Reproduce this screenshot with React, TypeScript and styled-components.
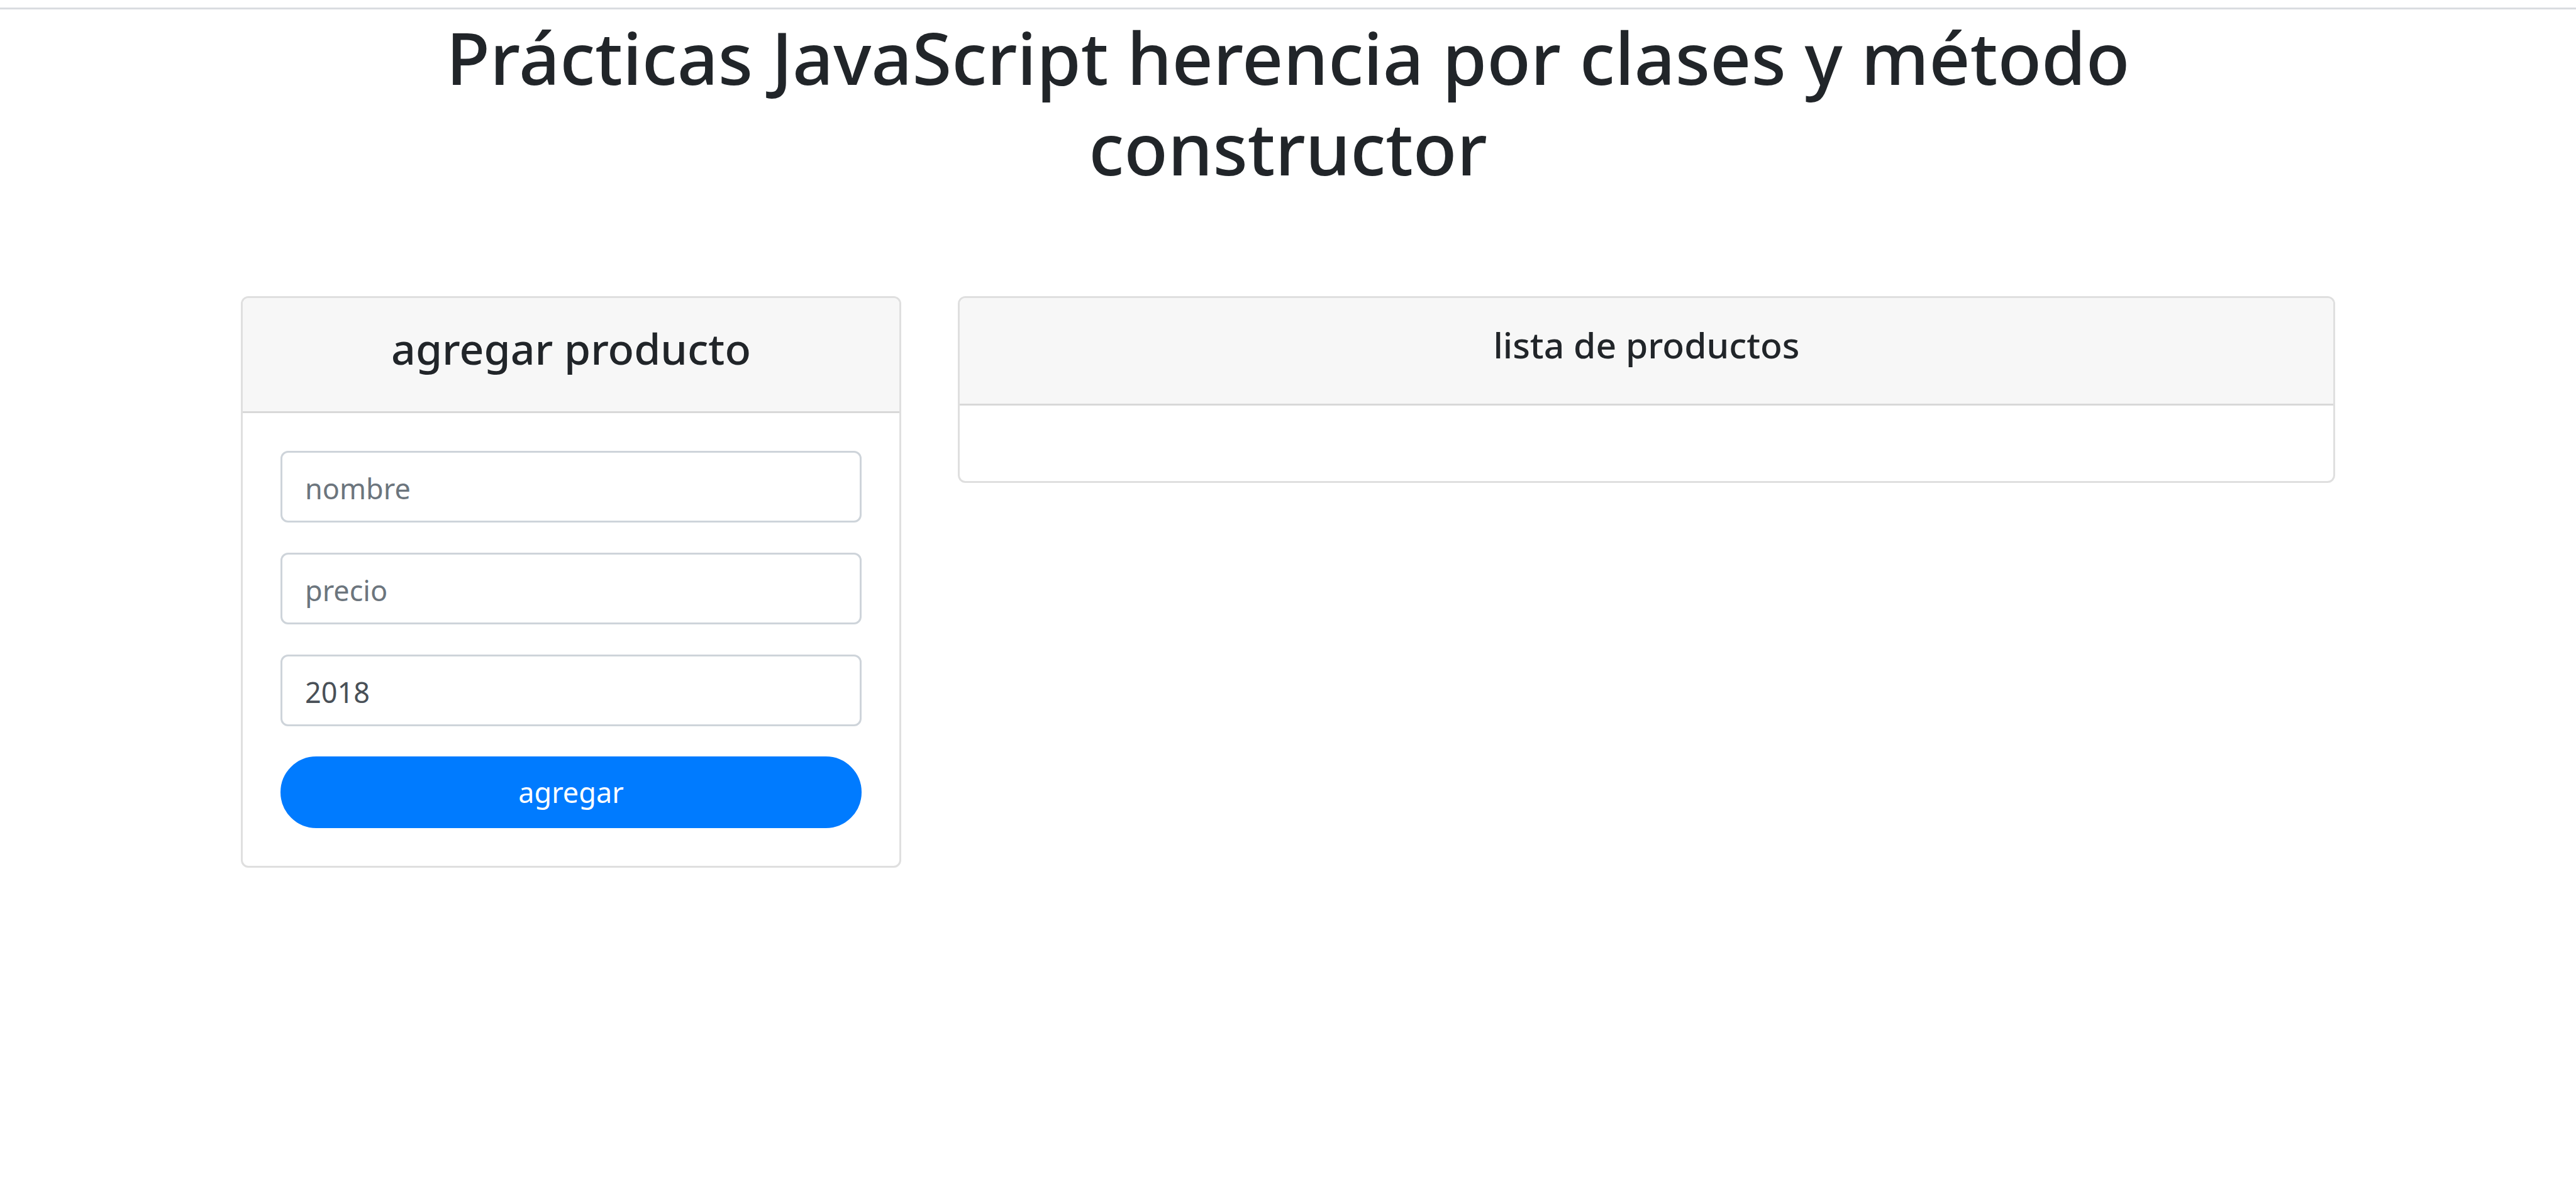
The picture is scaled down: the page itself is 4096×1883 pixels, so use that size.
import React, { useState } from "react";
import styled, { createGlobalStyle } from "styled-components";

const GlobalStyle = createGlobalStyle`
  *, *::before, *::after { box-sizing: border-box; }
  body {
    margin: 0;
    background: #fff;
    color: #212529;
    font-family: "Noto Sans", "Open Sans", sans-serif;
    font-size: 45px;
    line-height: 72px;
  }
`;

const Navbar = styled.nav`
  padding-top: 12px;
  border-bottom: 3px solid #dadce0;
`;

const Container = styled.main`
  width: 100%;
  max-width: 3420px;
  margin: 0 auto;
  padding: 0 45px;
`;

const Title = styled.h1`
  margin: 0 0 164px;
  padding: 4px 45px 0;
  font-size: 114px;
  font-weight: 500;
  line-height: 144px;
  text-align: center;
`;

const Row = styled.div`
  display: flex;
  align-items: flex-start;
  margin: 0 -45px;
`;

const Column = styled.div<{ $span: number }>`
  flex: 0 0 calc(100% * ${(p) => p.$span} / 12);
  padding: 0 45px;
`;

const Card = styled.section`
  overflow: hidden;
  border: 3px solid #dfdfdf;
  border-radius: 12px;
`;

const CardHeader = styled.header`
  padding: 38px 60px 58px;
  border-bottom: 3px solid #d8d8d8;
  background: #f7f7f7;
  text-align: center;
`;

const FormHeading = styled.h2`
  margin: 0;
  font-size: 68px;
  font-weight: 500;
  line-height: 84px;
`;

const ListHeading = styled.h3`
  margin: 0;
  font-size: 57px;
  font-weight: 500;
  line-height: 72px;
`;

const ProductForm = styled.form`
  display: flex;
  flex-direction: column;
  gap: 48px;
  padding: 60px;
`;

const Input = styled.input`
  width: 100%;
  height: 114px;
  padding: 20px 36px 16px;
  border: 3px solid #ced4da;
  border-radius: 12px;
  background: #fff;
  color: #495057;
  font: inherit;

  &::placeholder {
    color: #6c757d;
    opacity: 1;
  }
`;

const Button = styled.button`
  height: 114px;
  padding: 18px 36px;
  border: 3px solid #007bff;
  border-radius: 57px;
  background: #007bff;
  color: #fff;
  font: inherit;
  cursor: pointer;
`;

const ProductList = styled.div`
  padding: 60px;
`;

export default function App() {
  const [year, setYear] = useState("2018");
  const [products, setProducts] = useState<string[]>([]);

  const addProduct = (event: React.FormEvent<HTMLFormElement>) => {
    event.preventDefault();
    const data = new FormData(event.currentTarget);
    setProducts([...products, `${data.get("name")} ${data.get("price")} ${year}`]);
  };

  return (
    <>
      <GlobalStyle />
      <Navbar />
      <Container>
        <Title>Prácticas JavaScript herencia por clases y método constructor</Title>
        <Row>
          <Column $span={4}>
            <Card>
              <CardHeader>
                <FormHeading>agregar producto</FormHeading>
              </CardHeader>
              <ProductForm onSubmit={addProduct}>
                <Input name="name" placeholder="nombre" aria-label="nombre" />
                <Input name="price" placeholder="precio" aria-label="precio" />
                <Input
                  name="year"
                  value={year}
                  aria-label="año"
                  onChange={(e) => setYear(e.target.value)}
                />
                <Button type="submit">agregar</Button>
              </ProductForm>
            </Card>
          </Column>
          <Column $span={8}>
            <Card>
              <CardHeader>
                <ListHeading>lista de productos</ListHeading>
              </CardHeader>
              <ProductList>
                {products.map((product, index) => (
                  <div key={index}>{product}</div>
                ))}
              </ProductList>
            </Card>
          </Column>
        </Row>
      </Container>
    </>
  );
}
